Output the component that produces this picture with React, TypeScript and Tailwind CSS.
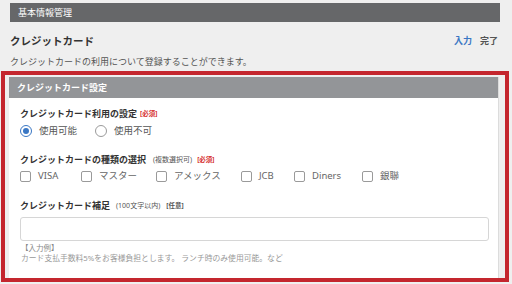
import React from "react";

const Radio = ({ checked }: { checked?: boolean }) => (
  <span
    className={
      checked
        ? "w-[12px] h-[12px] rounded-full border-[1.5px] border-[#3a77c4] bg-white flex items-center justify-center shrink-0"
        : "w-[12px] h-[12px] rounded-full border-[1.5px] border-[#9a9a9a] bg-white shrink-0"
    }
  >
    {checked && <span className="w-[6px] h-[6px] rounded-full bg-[#3a77c4]" />}
  </span>
);

const Check = () => (
  <span className="w-[11px] h-[11px] rounded-[2px] border border-[#9a9a9a] bg-white shrink-0" />
);

export default function App() {
  const cards: [string, string][] = [
    ["VISA", "w-[61px]"],
    ["マスター", "w-[75px]"],
    ["アメックス", "w-[85px]"],
    ["JCB", "w-[53px]"],
    ["Diners", "w-[68px]"],
    ["銀聯", "w-[40px]"],
  ];
  return (
    <div className="w-[512px] h-[284px] overflow-hidden bg-[#efefef] font-['Noto_Sans','Noto_Sans_CJK_JP',sans-serif] text-[#333]">
      <div className="pt-[3px] pl-[10px] pr-[12px]">
        <div className="h-[19px] bg-[#666769] text-white text-[9px] pl-[8px] flex items-center">
          基本情報管理
        </div>
      </div>
      <div className="mt-[12px] pl-[10px] pr-[14px] h-[14px] flex items-center justify-between">
        <div className="text-[10.5px] font-bold text-[#333] leading-[14px]">クレジットカード</div>
        <div className="flex gap-[8px] text-[9px] font-bold leading-[12px]">
          <span className="text-[#3a77c4]">入力</span>
          <span className="text-[#555]">完了</span>
        </div>
      </div>
      <div className="mt-[8px] pl-[10px] text-[9px] text-[#555] leading-[12px] h-[12px]">
        クレジットカードの利用について登録することができます。
      </div>
      <div className="mt-[3px] ml-[1px] w-[508px] h-[211px] border-[4px] border-[#c4262e] pt-[2px] pl-[4px] pr-[6px] bg-[#efefef] flex">
        <div className="flex-1 bg-white flex flex-col border-r border-[#dcdcdc]">
          <div className="h-[21px] bg-[#939598] text-white font-bold text-[9px] pl-[8px] flex items-center shrink-0">
            クレジットカード設定
          </div>
          <div className="pl-[11px] pr-[9px] pt-[10px] flex flex-col">
            <div className="h-[12px] flex items-center gap-[3px] leading-[12px]">
              <span className="text-[9px] font-bold text-[#333]">クレジットカード利用の設定</span>
              <span className="text-[6.5px] font-bold text-[#d63030]">[必須]</span>
            </div>
            <div className="mt-[5px] h-[12px] flex items-center text-[9.5px] text-[#555]">
              <div className="w-[75px] flex items-center gap-[7px]">
                <Radio checked />
                <span>使用可能</span>
              </div>
              <div className="flex items-center gap-[7px]">
                <Radio />
                <span>使用不可</span>
              </div>
            </div>
            <div className="mt-[17px] h-[12px] flex items-center leading-[12px]">
              <span className="text-[9px] font-bold text-[#333]">クレジットカードの種類の選択</span>
              <span className="ml-[7px] text-[7px] text-[#555]">(複数選択可)</span>
              <span className="ml-[5px] text-[6.5px] font-bold text-[#d63030]">[必須]</span>
            </div>
            <div className="mt-[4px] h-[12px] flex items-center text-[9.5px] text-[#666]">
              {cards.map(([label, w]) => (
                <div key={label} className={`${w} flex items-center gap-[7px]`}>
                  <Check />
                  <span>{label}</span>
                </div>
              ))}
            </div>
            <div className="mt-[18px] h-[12px] flex items-center leading-[12px]">
              <span className="text-[9px] font-bold text-[#333]">クレジットカード補足</span>
              <span className="ml-[6px] text-[7px] text-[#555]">(100文字以内)</span>
              <span className="ml-[6px] text-[6.5px] font-bold text-[#555]">[任意]</span>
            </div>
            <div className="mt-[5px] h-[24px] rounded-[3px] border border-[#d6d6d6] bg-white" />
            <div className="mt-[2px] pl-[1px] h-[10px] text-[7.5px] leading-[10px] text-[#888]">【入力例】</div>
            <div className="pl-[1px] h-[10px] text-[7.8px] leading-[10px] text-[#999]">
              カード支払手数料5%をお客様負担とします。 ランチ時のみ使用可能。など
            </div>
          </div>
        </div>
      </div>
    </div>
  );
}
